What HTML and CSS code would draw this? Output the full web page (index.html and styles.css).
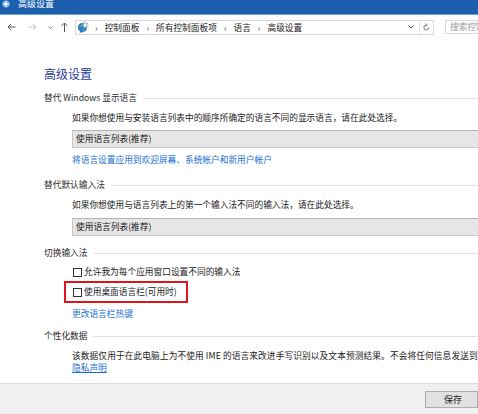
FILE: index.html
```html
<!DOCTYPE html>
<html lang="zh-CN">
<head>
<meta charset="utf-8">
<title>高级设置</title>
<link rel="stylesheet" href="styles.css">
</head>
<body>
<div class="window">
  <div class="titlebar">
    <svg class="app-icon" viewBox="0 0 10 9" width="10" height="9">
      <circle cx="5" cy="4" r="3.6" fill="#7fb6ec"/>
      <path d="M5 0.2 L5.8 3.2 L9 4 L5.8 4.8 L5 8 L4.2 4.8 L1 4 L4.2 3.2 Z" fill="#fff"/>
    </svg>
    <span class="title">高级设置</span>
  </div>

  <div class="navbar">
    <svg class="nav-back" viewBox="0 0 9 8" width="9" height="8"><path d="M8.5 4 H1 M4 1 L1 4 L4 7" fill="none" stroke="#555" stroke-width="1"/></svg>
    <svg class="nav-fwd" viewBox="0 0 9 8" width="9" height="8"><path d="M0.5 4 H8 M5 1 L8 4 L5 7" fill="none" stroke="#c4c4c4" stroke-width="1"/></svg>
    <svg class="nav-recent" viewBox="0 0 5 3" width="5" height="3"><path d="M0.5 0.5 L2.5 2.5 L4.5 0.5" fill="none" stroke="#777" stroke-width="0.9"/></svg>
    <svg class="nav-up" viewBox="0 0 7 10" width="7" height="10"><path d="M3.5 10 V1 M0.5 4 L3.5 1 L6.5 4" fill="none" stroke="#555" stroke-width="1"/></svg>
    <div class="address">
      <svg class="cp-icon" viewBox="0 0 12 12" width="12" height="12">
        <circle cx="5.5" cy="6.5" r="4.6" fill="#2b7fd6"/>
        <path d="M2.4 4.6 C3.4 3.4 4.8 3.6 5 4.8 C4.6 5.9 3.3 6.2 2.3 5.7 Z" fill="#4caf50"/>
        <path d="M6 8 C7.2 7.4 8.6 8.2 8.2 9.6 C7.2 10.4 6.2 9.6 6 8 Z" fill="#4caf50"/>
        <path d="M8 0.5 L8.7 2.6 L10.9 2 L9.5 3.8 L11.5 5 L9.2 5.2 L9.3 7.4 L8 5.7 L6.5 7.2 L6.8 5 L4.6 4.6 L6.7 3.6 L5.8 1.6 L7.6 2.6 Z" fill="#fff" stroke="#6d8fb3" stroke-width="0.5"/>
        <path d="M2.5 11.5 L4 9.8 L5.5 11.5 Z" fill="#1d5fb0"/>
      </svg>
      <span class="sep">›</span><span class="crumb">控制面板</span>
      <span class="sep">›</span><span class="crumb">所有控制面板项</span>
      <span class="sep">›</span><span class="crumb">语言</span>
      <span class="sep">›</span><span class="crumb">高级设置</span>
      <span class="spacer"></span>
      <svg class="addr-dd" viewBox="0 0 6 4" width="6" height="4"><path d="M0.5 0.5 L3 3 L5.5 0.5" fill="none" stroke="#444" stroke-width="0.9"/></svg>
      <span class="refresh">
        <svg viewBox="0 0 8 9" width="7" height="8"><path d="M6.8 5 A2.9 2.9 0 1 1 4 2.1" fill="none" stroke="#555" stroke-width="0.9"/><path d="M3.2 0.4 L4.9 2.1 L3.2 3.8" fill="none" stroke="#555" stroke-width="0.9"/></svg>
      </span>
    </div>
    <div class="search">搜索控制面板</div>
  </div>

  <main class="content">
    <h1 class="heading">高级设置</h1>

    <div class="section-label s1">替代 Windows 显示语言</div>
    <p class="desc d1">如果你想使用与安装语言列表中的顺序所确定的语言不同的显示语言，请在此处选择。</p>
    <div class="select sel1">使用语言列表(推荐)</div>
    <a class="link l1" href="#">将语言设置应用到欢迎屏幕、系统帐户和新用户帐户</a>

    <div class="section-label s2">替代默认输入法</div>
    <p class="desc d2">如果你想使用与语言列表上的第一个输入法不同的输入法，请在此处选择。</p>
    <div class="select sel2">使用语言列表(推荐)</div>

    <div class="section-label s3">切换输入法</div>
    <label class="check cb1"><span class="box"></span>允许我为每个应用窗口设置不同的输入法</label>
    <label class="check cb2 highlight"><span class="box"></span>使用桌面语言栏(可用时)</label>
    <a class="link l2" href="#">更改语言栏热键</a>

    <div class="section-label s4">个性化数据</div>
    <p class="desc d4">该数据仅用于在此电脑上为不使用 IME 的语言来改进手写识别以及文本预测结果。不会将任何信息发送到 Microsoft。</p>
    <a class="link privacy" href="#">隐私声明</a>
  </main>

  <footer class="footer">
    <button class="save" type="button">保存</button>
  </footer>
</div>
</body>
</html>
```

FILE: styles.css
```css
html, body {
  margin: 0;
  padding: 0;
}

body {
  width: 478px;
  height: 414px;
  overflow: hidden;
  background: #fff;
  font-family: "Noto Sans CJK SC", "Noto Sans", sans-serif;
  font-size: 8.7px;
  color: #1a1a1a;
}

.window {
  display: flex;
  flex-direction: column;
  width: 478px;
  height: 414px;
  overflow: hidden;
}

/* title bar */
.titlebar {
  flex: none;
  height: 14px;
  background: #1b5fad;
  border-bottom: 1px solid #6a9fd6;
  display: flex;
  align-items: flex-start;
  overflow: hidden;
}

.app-icon {
  margin-left: 1px;
  flex: none;
}

.title {
  color: #fff;
  font-size: 9px;
  line-height: 8px;
  margin-left: 7px;
}

/* navigation bar */
.navbar {
  flex: none;
  height: 24px;
  display: flex;
  align-items: center;
  white-space: nowrap;
}

.nav-back { margin-left: 7px; flex: none; }
.nav-fwd { margin-left: 12px; flex: none; }
.nav-recent { margin-left: 11px; flex: none; }
.nav-up { margin-left: 8px; flex: none; }

.address {
  flex: none;
  margin-left: 7px;
  width: 359px;
  height: 15px;
  box-sizing: border-box;
  border: 1px solid #d9d9d9;
  display: flex;
  align-items: center;
  line-height: 13px;
}

.cp-icon {
  flex: none;
  margin-left: 1px;
}

.sep {
  color: #555;
  margin: 0 7px 0 7px;
}

.address .cp-icon + .sep {
  margin-left: 6px;
}

.spacer {
  flex: 1;
}

.addr-dd {
  flex: none;
  margin-right: 5px;
}

.refresh {
  flex: none;
  width: 13px;
  height: 13px;
  border-left: 1px solid #e3e3e3;
  display: flex;
  align-items: center;
  justify-content: center;
}

.search {
  flex: none;
  margin-left: 11px;
  width: 60px;
  height: 14px;
  box-sizing: border-box;
  border: 1px solid #d9d9d9;
  color: #9a9a9a;
  padding-left: 4px;
  line-height: 12px;
}

/* main content */
.content {
  flex: 1;
  width: 560px;
  padding-left: 44px;
  box-sizing: border-box;
}

.heading {
  margin: 27px 0 0;
  font-size: 12px;
  line-height: 16px;
  font-weight: normal;
  color: #1f3c96;
}

.section-label {
  display: flex;
  align-items: center;
  height: 12px;
  line-height: 12px;
  color: #2b2b2b;
  white-space: nowrap;
}

.section-label::after {
  content: "";
  flex: 1;
  height: 1px;
  background: #e2e2e2;
  margin-left: 6px;
}

.s1 { margin-top: 10px; }
.s2 { margin-top: 13px; }
.s3 { margin-top: 11px; }
.s4 { margin-top: 10px; }

.desc {
  margin: 8px 0 0 28px;
  line-height: 12px;
  white-space: nowrap;
}

.d4 {
  letter-spacing: 0.1px;
}

.select {
  margin-left: 28px;
  width: 430px;
  height: 18px;
  box-sizing: border-box;
  border: 1px solid #c6c6c6;
  border-top-color: #b4b4b4;
  background: repeating-conic-gradient(#e0e0e0 0 25%, #ebebeb 0 50%) 0 0 / 2px 2px;
  padding-left: 3px;
  line-height: 16px;
  color: #1a1a1a;
}

.sel1 { margin-top: 6px; }
.sel2 { margin-top: 7px; }

.link {
  display: block;
  margin-left: 28px;
  line-height: 12px;
  color: #1a6fd0;
  text-decoration: none;
  white-space: nowrap;
  width: max-content;
}

.l1 { margin-top: 6px; }
.l2 { margin-top: 5px; }

.privacy {
  margin-top: 0;
  text-decoration: underline;
}

.check {
  display: flex;
  align-items: center;
  line-height: 12px;
  white-space: nowrap;
}

.box {
  flex: none;
  width: 9px;
  height: 9px;
  box-sizing: border-box;
  border: 1px solid #333;
  background: #fff;
  margin: 0 2px 0 1px;
}

.cb1 {
  margin: 7px 0 0 28px;
}

.highlight {
  margin: 3px 0 0 20px;
  width: 124px;
  height: 22px;
  box-sizing: border-box;
  border: 2px solid #e0141e;
  padding-left: 6px;
}

/* footer */
.footer {
  flex: none;
  height: 31px;
  box-sizing: border-box;
  background: #f0f0f0;
  border-top: 1px solid #dcdcdc;
  display: flex;
  align-items: flex-start;
}

.save {
  margin: 7px 0 0 425px;
  width: 56px;
  height: 17px;
  box-sizing: border-box;
  border: 1px solid #adadad;
  background: #e1e1e1;
  font-family: inherit;
  font-size: 9px;
  line-height: 15px;
  color: #1a1a1a;
  text-align: left;
  padding: 0 0 0 18px;
}
```
